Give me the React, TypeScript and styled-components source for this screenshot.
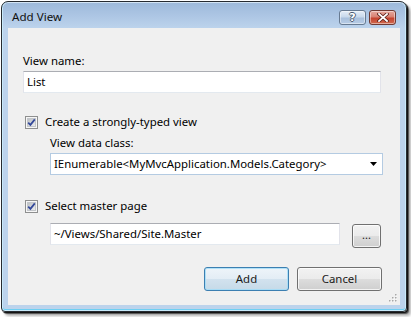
import React from "react";
import styled, { createGlobalStyle } from "styled-components";

const Global = createGlobalStyle`
  html, body { margin: 0; padding: 0; background: #ffffff; }
  body { font-family: "Noto Sans", "Open Sans", "DejaVu Sans", sans-serif; font-size: 11.4px; color: #000; }
  * { box-sizing: border-box; }
`;

const Page = styled.div`
  width: 411px;
  height: 317px;
  padding: 1px 0 0 1px;
`;

const Window = styled.div`
  width: 406px;
  height: 311px;
  border: 1px solid #262b30;
  border-radius: 7px 7px 4px 4px;
  background: linear-gradient(#9db9da 0px, #adc6e4 14px, #bcd3ec 26px, #bcd3ec 100%);
  box-shadow: inset 0 0 0 1px rgba(230, 243, 252, 0.75), inset 0 -1px 0 1px #6fcff2,
    1px 1px 0 rgba(0, 0, 0, 0.75), 2px 2px 1px rgba(0, 0, 0, 0.55), 4px 4px 3px rgba(0, 0, 0, 0.3);
  display: flex;
  flex-direction: column;
`;

const TitleBar = styled.div`
  height: 26px;
  display: flex;
  align-items: flex-start;
  padding: 0 10px 0 10px;
`;

const Title = styled.div`
  padding-top: 7px;
  line-height: 16px;
  font-size: 11.6px;
  color: #111;
`;

const CaptionButtons = styled.div`
  margin-left: auto;
  padding-top: 8px;
  display: flex;
  gap: 3px;
`;

const CaptionButton = styled.div<{ $kind: "help" | "close" }>`
  width: 27px;
  height: 15px;
  border-radius: 3px;
  display: flex;
  align-items: center;
  justify-content: center;
  border: 1px solid ${(p) => (p.$kind === "close" ? "#6f3a33" : "#677a91")};
  background: ${(p) =>
    p.$kind === "close"
      ? "linear-gradient(#e6a99f 0%, #d98273 45%, #c5432f 55%, #cf6a4f 100%)"
      : "linear-gradient(#e4edf7 0%, #c9d9ec 45%, #a9c0dc 55%, #b8cde6 100%)"};
  box-shadow: inset 0 0 0 1px rgba(255, 255, 255, 0.45);
`;

const HelpGlyph = styled.span`
  font-family: "DejaVu Sans", sans-serif;
  font-weight: bold;
  font-size: 11px;
  line-height: 11px;
  color: #fff;
  text-shadow: 1px 0 0 #4d5d72, -1px 0 0 #4d5d72, 0 1px 0 #4d5d72, 0 -1px 0 #4d5d72;
`;

const Client = styled.div`
  position: relative;
  flex: 1;
  margin: 0 6px 6px 6px;
  background: #f0f0f0;
  padding: 25px 17px 0 15px;
  display: flex;
  flex-direction: column;
`;

const Label = styled.div`
  line-height: 16px;
  height: 16px;
  white-space: nowrap;
`;

const SubLabel = styled(Label)`
  margin-top: 5px;
`;

const TextBox = styled.div<{ $width?: number }>`
  height: 22px;
  ${(p) => (p.$width ? `width: ${p.$width}px;` : "")}
  background: #fff;
  border: 1px solid #e2e3ea;
  border-top-color: #abadb3;
  border-bottom-color: #e3e9ef;
  display: flex;
  align-items: center;
  padding-left: 3px;
  line-height: 16px;
  white-space: nowrap;
`;

const NameBox = styled(TextBox)`
  margin-top: 2px;
  margin-right: 2px;
`;

const CheckRow = styled.div<{ $top: number }>`
  margin-top: ${(p) => p.$top}px;
  margin-left: 2px;
  height: 16px;
  display: flex;
  align-items: center;
  gap: 7px;
  line-height: 16px;
`;

const Indented = styled.div`
  padding-left: 27px;
  display: flex;
  flex-direction: column;
`;

const ComboBox = styled.div`
  margin-top: 2px;
  height: 22px;
  background: #fff;
  border: 1px solid #b4cbe2;
  display: flex;
  align-items: center;
  padding: 0 5px 0 3px;
  white-space: nowrap;
`;

const ComboText = styled.span`
  flex: 1;
  line-height: 16px;
`;

const MasterRow = styled.div`
  margin-top: 9px;
  margin-right: 2px;
  display: flex;
  align-items: flex-start;
  justify-content: space-between;
`;

const PushButton = styled.div<{ $width: number; $default?: boolean }>`
  width: ${(p) => p.$width}px;
  height: 24px;
  border-radius: 3px;
  display: flex;
  align-items: center;
  justify-content: center;
  line-height: 16px;
  color: #1a1a1a;
  border: 1px solid ${(p) => (p.$default ? "#3c7fb1" : "#707070")};
  background: ${(p) =>
    p.$default
      ? "linear-gradient(#eef4f9 0%, #e3edf5 50%, #d2e2ee 50%, #c6dae8 100%)"
      : "linear-gradient(#f2f2f2 0%, #ebebeb 50%, #dddddd 50%, #cfcfcf 100%)"};
  box-shadow: inset 0 0 0 1px ${(p) => (p.$default ? "rgba(160, 220, 248, 0.8)" : "rgba(255, 255, 255, 0.75)")};
`;

const BrowseButton = styled(PushButton)`
  margin-top: 1px;
  font-size: 11px;
  padding-bottom: 3px;
`;

const ButtonRow = styled.div`
  margin-top: 19px;
  margin-right: 1px;
  display: flex;
  justify-content: flex-end;
  gap: 8px;
`;

const Grip = styled.svg`
  position: absolute;
  right: 3px;
  bottom: 3px;
`;

const CheckBox: React.FC = () => (
  <svg width="13" height="13" viewBox="0 0 13 13">
    <defs>
      <linearGradient id="cbg" x1="0" y1="0" x2="1" y2="1">
        <stop offset="0" stopColor="#b9bdc2" />
        <stop offset="1" stopColor="#f0f0f0" />
      </linearGradient>
    </defs>
    <rect x="0.5" y="0.5" width="12" height="12" fill="#f6f6f6" stroke="#8e8f8f" />
    <rect x="2.5" y="2.5" width="8" height="8" fill="url(#cbg)" stroke="#c3c6ca" />
    <path d="M3.2 6.6 L5.4 8.9 L9.8 3.4" fill="none" stroke="#33489a" strokeWidth="1.7" />
  </svg>
);

const CloseGlyph: React.FC = () => (
  <svg width="12" height="9" viewBox="0 0 12 9">
    <path d="M2 1 L10 8 M10 1 L2 8" stroke="#5a1f18" strokeWidth="3.4" strokeLinecap="square" />
    <path d="M2 1 L10 8 M10 1 L2 8" stroke="#ffffff" strokeWidth="1.8" strokeLinecap="square" />
  </svg>
);

export default function App() {
  const dots: [number, number][] = [
    [6, 0],
    [3, 3],
    [6, 3],
    [0, 6],
    [3, 6],
    [6, 6],
  ];
  return (
    <>
      <Global />
      <Page>
        <Window>
          <TitleBar>
            <Title>Add View</Title>
            <CaptionButtons>
              <CaptionButton $kind="help">
                <HelpGlyph>?</HelpGlyph>
              </CaptionButton>
              <CaptionButton $kind="close">
                <CloseGlyph />
              </CaptionButton>
            </CaptionButtons>
          </TitleBar>
          <Client>
            <Label>View name:</Label>
            <NameBox>List</NameBox>
            <CheckRow $top={21}>
              <CheckBox />
              <span>Create a strongly-typed view</span>
            </CheckRow>
            <Indented>
              <SubLabel>View data class:</SubLabel>
              <ComboBox>
                <ComboText>IEnumerable&lt;MyMvcApplication.Models.Category&gt;</ComboText>
                <svg width="7" height="4" viewBox="0 0 7 4">
                  <polygon points="0,0 7,0 3.5,4" fill="#000" />
                </svg>
              </ComboBox>
            </Indented>
            <CheckRow $top={23}>
              <CheckBox />
              <span>Select master page</span>
            </CheckRow>
            <Indented>
              <MasterRow>
                <TextBox $width={290}>~/Views/Shared/Site.Master</TextBox>
                <BrowseButton $width={29}>...</BrowseButton>
              </MasterRow>
            </Indented>
            <ButtonRow>
              <PushButton $width={85} $default>
                Add
              </PushButton>
              <PushButton $width={85}>Cancel</PushButton>
            </ButtonRow>
            <Grip width="8" height="8" viewBox="0 0 8 8">
              {dots.map(([x, y]) => (
                <g key={`${x}-${y}`}>
                  <rect x={x + 1} y={y + 1} width="1.5" height="1.5" fill="#ffffff" />
                  <rect x={x} y={y} width="1.5" height="1.5" fill="#a8a8a8" />
                </g>
              ))}
            </Grip>
          </Client>
        </Window>
      </Page>
    </>
  );
}
